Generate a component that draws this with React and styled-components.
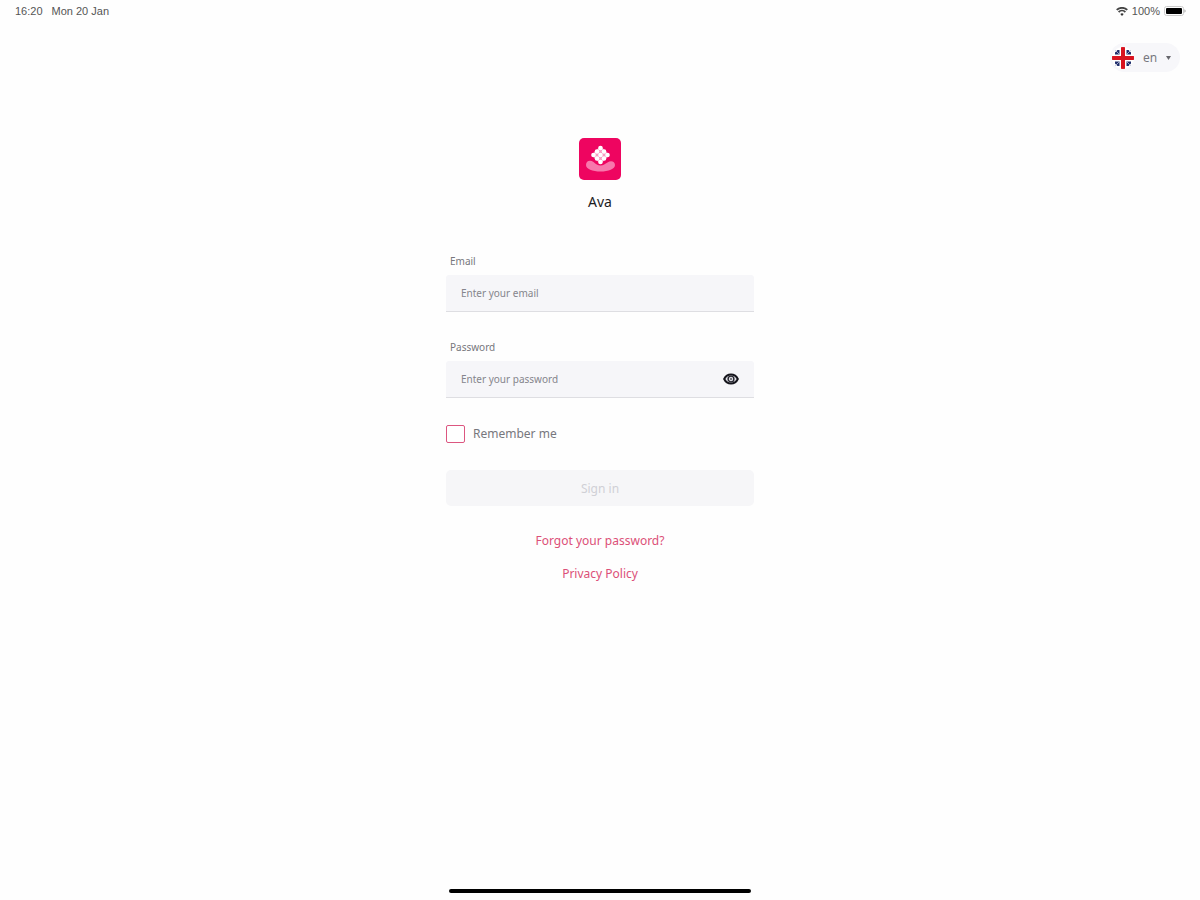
import React, { useState } from 'react';
import styled, { createGlobalStyle } from 'styled-components';

const dots = [
    [0, -7], [-3.5, -3.5], [3.5, -3.5],
    [-7, 0], [0, 0], [7, 0],
    [-3.5, 3.5], [3.5, 3.5], [0, 7],
];

const App = () => {
    const [email, setEmail] = useState('');
    const [password, setPassword] = useState('');
    const [visible, setVisible] = useState(false);

    return (
        <Page>
            <GlobalStyle />
            <StatusBar>
                <StatusGroup $gap="9px">
                    <span>16:20</span>
                    <span>Mon 20 Jan</span>
                </StatusGroup>
                <StatusGroup $gap="4px">
                    <WifiIcon />
                    <span>100%</span>
                    <BatteryIcon />
                </StatusGroup>
            </StatusBar>
            <TopBar>
                <Language>
                    <FlagIcon />
                    <LanguageSelect aria-label="Language" defaultValue="en">
                        <option value="en">en</option>
                        <option value="fr">fr</option>
                    </LanguageSelect>
                    <svg width="5" height="4" viewBox="0 0 5 4" aria-hidden="true">
                        <path d="M0 0h5L2.5 4z" fill="#66666c" />
                    </svg>
                </Language>
            </TopBar>
            <Main>
                <Logo />
                <Title>Ava</Title>
                <Form onSubmit={(e) => e.preventDefault()}>
                    <Field>
                        <Label htmlFor="email">Email</Label>
                        <InputBox>
                            <Input
                                id="email"
                                type="email"
                                placeholder="Enter your email"
                                value={email}
                                onChange={(e) => setEmail(e.target.value)}
                            />
                        </InputBox>
                    </Field>
                    <Field>
                        <Label htmlFor="password">Password</Label>
                        <InputBox>
                            <Input
                                id="password"
                                type={visible ? 'text' : 'password'}
                                placeholder="Enter your password"
                                value={password}
                                onChange={(e) => setPassword(e.target.value)}
                            />
                            <EyeButton type="button" aria-label="Show password" onClick={() => setVisible(!visible)}>
                                <EyeIcon />
                            </EyeButton>
                        </InputBox>
                    </Field>
                    <Remember>
                        <Checkbox id="remember" type="checkbox" />
                        <label htmlFor="remember">Remember me</label>
                    </Remember>
                    <SubmitButton type="submit" disabled={!email || !password}>Sign in</SubmitButton>
                </Form>
                <Links>
                    <TextLink href="#forgot">Forgot your password?</TextLink>
                    <TextLink href="#privacy">Privacy Policy</TextLink>
                </Links>
            </Main>
            <HomeIndicator />
        </Page>
    );
};

export default App;

const WifiIcon = () => (
    <svg width="12" height="9" viewBox="0 0 12 9" aria-hidden="true">
        <path d="M6 9 4.3 7a2.6 2.6 0 0 1 3.4 0z" fill="#333" />
        <path d="M2.6 5a5 5 0 0 1 6.8 0M.7 2.9a7.8 7.8 0 0 1 10.6 0" fill="none" stroke="#444" strokeWidth="1.8" />
    </svg>
);

const BatteryIcon = () => (
    <svg width="22" height="10" viewBox="0 0 22 10" aria-hidden="true">
        <rect x=".5" y=".5" width="19" height="9" rx="2" fill="none" stroke="#ccc" />
        <rect x="2" y="2" width="16" height="6" rx="1" fill="#000" />
        <path d="M20.5 3.2v3.6c1.4-.6 1.4-3 0-3.6z" fill="#999" />
    </svg>
);

const FlagIcon = () => (
    <svg width="24" height="24" viewBox="0 0 24 24" aria-hidden="true">
        <clipPath id="flag"><circle cx="12" cy="12" r="11" /></clipPath>
        <g clipPath="url(#flag)">
            <path fill="#fff" d="M0 0h24v24H0z" />
            <path
                d="M4 6.500 6.500 4 8.500 4v4.500H4zM20 6.500 17.500 4 15.500 4v4.500H20zM4 17.500 6.500 20 8.500 20v-4.500H4zM20 17.500 17.500 20 15.500 20v-4.500H20z"
                fill="#1f2d6b"
            />
            <path d="M3 3l5.500 5.500M21 3l-5.500 5.500M3 21l5.500-5.500M21 21l-5.500-5.500" stroke="#b9bfd8" strokeWidth=".8" />
            <path d="M12 0v24M0 12h24" stroke="#fff" strokeWidth="6" />
            <path d="M12 0v24M0 12h24" stroke="#d8131f" strokeWidth="4" />
        </g>
    </svg>
);

const EyeIcon = () => (
    <svg width="16" height="12" viewBox="0 0 16 12" aria-hidden="true">
        <path d="M1.2 6C2.6 3 5 1.5 8 1.5S13.4 3 14.8 6C13.4 9 11 10.5 8 10.5S2.6 9 1.2 6z" fill="#e4e4ea" stroke="#15151c" strokeWidth="2" />
        <circle cx="8" cy="6" r="2.9" fill="none" stroke="#25252e" strokeWidth="1.4" />
        <circle cx="8" cy="6" r="1.2" fill="#77777e" />
    </svg>
);

const Logo = () => (
    <svg width="42" height="42" viewBox="0 0 42 42" role="img" aria-label="Ava logo">
        <rect width="42" height="42" rx="5" fill="#ee0560" />
        <path d="M7 27c0-4 4-5.500 7.500-3 2.500 2 4 3.500 7 3.500s4.500-1.500 7-3c3.500-2.500 7.500-1 7.500 2.500 0 4-6.500 6.500-14.500 6.500S7 31 7 27z" fill="#f778ac" />
        <path d="M21.500 8 30.500 17 21.500 26 12.500 17z" fill="#f99ac1" />
        <g transform="translate(21.500 17)" fill="#fff">
            {dots.map(([x, y]) => (
                <circle key={`${x},${y}`} cx={x} cy={y} r="2.3" />
            ))}
        </g>
    </svg>
);

const GlobalStyle = createGlobalStyle`
    * {
        box-sizing: border-box;
    }

    body {
        margin: 0;
        background: #fefefe;
        font-family: "Noto Sans", "Open Sans", sans-serif;
        color: #77777d;
    }

    input, button, select {
        font-family: inherit;
    }
`;

const Page = styled.div`
    display: flex;
    flex-direction: column;
    align-items: center;
    min-height: 100vh;
`;

const StatusBar = styled.header`
    display: flex;
    justify-content: space-between;
    align-self: stretch;
    padding: 0 14px 0 15px;
    font-family: "Liberation Sans", Arial, sans-serif;
    font-size: 11px;
    line-height: 22px;
    color: #555;
`;

const StatusGroup = styled.div`
    display: flex;
    align-items: center;
    gap: ${(props) => props.$gap};
`;

const TopBar = styled.div`
    display: flex;
    justify-content: flex-end;
    align-self: stretch;
    padding: 21px 20px 0;
`;

const Language = styled.div`
    display: flex;
    align-items: center;
    height: 29px;
    padding: 0 9px 0 1px;
    border-radius: 15px;
    background: #f7f7fa;
`;

const LanguageSelect = styled.select`
    appearance: none;
    width: 31px;
    padding: 0 0 0 8px;
    border: 0;
    background: transparent;
    color: #77777e;
    font-size: 12px;
`;

const Main = styled.main`
    display: flex;
    flex-direction: column;
    align-items: center;
    width: 100%;
    max-width: 308px;
    margin-top: 66px;
`;

const Title = styled.h1`
    margin: 12px 0 0;
    font-size: 14px;
    font-weight: 400;
    line-height: 20px;
    color: #1c1c1e;
`;

const Form = styled.form`
    display: flex;
    flex-direction: column;
    gap: 27px;
    width: 100%;
    margin-top: 41px;
`;

const Field = styled.div`
    display: flex;
    flex-direction: column;
    gap: 6px;
`;

const Label = styled.label`
    padding-left: 4px;
    font-size: 10px;
    line-height: 16px;
`;

const InputBox = styled.div`
    display: flex;
    align-items: center;
    height: 37px;
    padding: 0 15px;
    border-bottom: 1px solid #dedee2;
    border-radius: 3px 3px 0 0;
    background: #f6f6f9;
`;

const Input = styled.input`
    flex: 1;
    min-width: 0;
    padding: 0;
    border: 0;
    outline: 0;
    background: transparent;
    font-size: 10px;
    color: #1c1c1e;

    &::placeholder {
        color: #85858c;
        opacity: 1;
    }
`;

const EyeButton = styled.button`
    display: flex;
    padding: 0;
    border: 0;
    background: transparent;
`;

const Remember = styled.div`
    display: flex;
    align-items: center;
    gap: 8px;
    font-size: 12px;
    line-height: 18px;
`;

const Checkbox = styled.input`
    appearance: none;
    width: 19px;
    height: 18px;
    margin: 0;
    border: 1px solid #dc5680;
    border-radius: 2px;
    background: #fff;

    &:checked {
        background: #ee0560;
    }
`;

const SubmitButton = styled.button`
    height: 36px;
    border: 0;
    border-radius: 5px;
    background: #f6f6f8;
    color: #d0d0d6;
    font-size: 12px;

    &:enabled {
        background: #ee0560;
        color: #fff;
    }
`;

const Links = styled.nav`
    display: flex;
    flex-direction: column;
    align-items: center;
    gap: 13px;
    margin-top: 25px;
`;

const TextLink = styled.a`
    font-size: 12px;
    line-height: 20px;
    color: #dc5078;
    text-decoration: none;
`;

const HomeIndicator = styled.div`
    width: 302px;
    height: 4px;
    margin: auto 0 7px;
    border-radius: 2px;
    background: #000;
`;
